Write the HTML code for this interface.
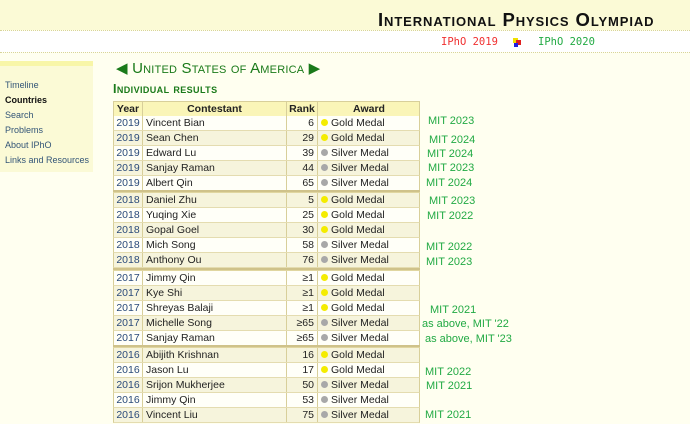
<!DOCTYPE html>
<html><head><meta charset="utf-8"><style>
*{margin:0;padding:0;box-sizing:border-box}
body{width:690px;height:424px;overflow:hidden;background:#fffff0;font-family:"Liberation Sans","DejaVu Sans",sans-serif;position:relative}
.a{position:absolute;white-space:nowrap}
#hdr{left:0;top:0;width:690px;height:30px;background:#fbfad6}
#band{left:0;top:31px;width:690px;height:21px;background:#fff}
.dot{left:0;width:690px;height:1px;border-top:1px dotted #d8d49a}
#title{left:378px;top:9px;font-size:18.5px;font-weight:bold;font-variant:small-caps;color:#111;letter-spacing:0.9px}
#side{left:0;top:61px;width:93px;height:111px;background:#fbfad6}
#sidetop{left:0;top:61px;width:93px;height:5px;background:#f8f6a8}
.nav{left:5px;font-size:9px;color:#335577}
#country{left:116px;top:59px;font-size:15px;font-variant:small-caps;color:#1a7a1a;letter-spacing:0.2px}
#ind{left:113px;top:82px;font-size:12.5px;font-weight:bold;font-variant:small-caps;color:#1a7a1a;letter-spacing:0.4px}
.row{position:absolute;left:113px;width:307px;height:15px;font-size:10.5px;color:#222;border-left:1px solid #d8cf9a;border-right:1px solid #d8cf9a;border-bottom:1px solid #e4dcb0}
.row div{position:absolute;top:0;height:14px;line-height:15px;border-right:1px solid #d8cf9a}
.c1{left:0;width:29px;text-align:center;color:#2a4a7a}
.c2{left:29px;width:144px;padding-left:3px}
.c3{left:173px;width:31px;text-align:right;padding-right:3px}
.c4{left:204px;width:102px;padding-left:3px;border-right:none!important}
.w{background:#fffff8}.c{background:#f6f4dc}
.h{background:#faf5b8;font-weight:bold;border-top:1px solid #d8cf9a}
.h div{text-align:center!important;padding:0!important;color:#222}
.g::before,.s::before{content:"";display:inline-block;width:7px;height:7px;border-radius:50%;margin-right:3px;vertical-align:0}
.g::before{background:#f4ec00}.s::before{background:#a8a8a8}
.sep{position:absolute;left:113px;width:307px;height:3px;border-top:2px solid #cfc28a;border-bottom:1px solid #e0d6a0}
.m{position:absolute;font-size:11px;color:#22aa44;white-space:nowrap}
</style></head><body>
<div class="a" id="hdr"></div>
<div class="a dot" style="top:30px"></div>
<div class="a" id="band"></div>
<div class="a dot" style="top:52px"></div>
<div class="a" id="title">International Physics Olympiad</div>
<div class="a" style="left:441px;top:36px;font-size:10.5px;color:#f03030;font-family:'DejaVu Sans Mono',monospace">IPhO 2019</div>
<div class="a" style="left:513px;top:38px;width:5px;height:5px;background:#f0e000"></div>
<div class="a" style="left:516px;top:40px;width:5px;height:5px;background:#e02020"></div>
<div class="a" style="left:514px;top:43px;width:4px;height:4px;background:#2020e0"></div>
<div class="a" style="left:538px;top:36px;font-size:10.5px;color:#22aa44;font-family:'DejaVu Sans Mono',monospace">IPhO 2020</div>
<div class="a" id="side"></div><div class="a" id="sidetop"></div>
<div class="a nav" style="top:80px">Timeline</div>
<div class="a nav" style="top:95px;font-weight:bold;color:#111">Countries</div>
<div class="a nav" style="top:110px">Search</div>
<div class="a nav" style="top:125px">Problems</div>
<div class="a nav" style="top:140px">About IPhO</div>
<div class="a nav" style="top:155px">Links and Resources</div>
<div class="a" id="country">◀ United States of America ▶</div>
<div class="a" id="ind">Individual results</div>

<div class="row h" style="top:101px;height:16px"><div class="c1">Year</div><div class="c2">Contestant</div><div class="c3">Rank</div><div class="c4">Award</div></div>

<div class="row w" style="top:116px"><div class="c1">2019</div><div class="c2">Vincent Bian</div><div class="c3">6</div><div class="c4 g">Gold Medal</div></div>
<div class="row c" style="top:131px"><div class="c1">2019</div><div class="c2">Sean Chen</div><div class="c3">29</div><div class="c4 g">Gold Medal</div></div>
<div class="row w" style="top:146px"><div class="c1">2019</div><div class="c2">Edward Lu</div><div class="c3">39</div><div class="c4 s">Silver Medal</div></div>
<div class="row c" style="top:161px"><div class="c1">2019</div><div class="c2">Sanjay Raman</div><div class="c3">44</div><div class="c4 s">Silver Medal</div></div>
<div class="row w" style="top:176px"><div class="c1">2019</div><div class="c2">Albert Qin</div><div class="c3">65</div><div class="c4 s">Silver Medal</div></div>
<div class="sep" style="top:190px"></div>
<div class="row c" style="top:193px"><div class="c1">2018</div><div class="c2">Daniel Zhu</div><div class="c3">5</div><div class="c4 g">Gold Medal</div></div>
<div class="row w" style="top:208px"><div class="c1">2018</div><div class="c2">Yuqing Xie</div><div class="c3">25</div><div class="c4 g">Gold Medal</div></div>
<div class="row c" style="top:223px"><div class="c1">2018</div><div class="c2">Gopal Goel</div><div class="c3">30</div><div class="c4 g">Gold Medal</div></div>
<div class="row w" style="top:238px"><div class="c1">2018</div><div class="c2">Mich Song</div><div class="c3">58</div><div class="c4 s">Silver Medal</div></div>
<div class="row c" style="top:253px"><div class="c1">2018</div><div class="c2">Anthony Ou</div><div class="c3">76</div><div class="c4 s">Silver Medal</div></div>
<div class="sep" style="top:268px"></div>
<div class="row w" style="top:271px"><div class="c1">2017</div><div class="c2">Jimmy Qin</div><div class="c3">≥1</div><div class="c4 g">Gold Medal</div></div>
<div class="row c" style="top:286px"><div class="c1">2017</div><div class="c2">Kye Shi</div><div class="c3">≥1</div><div class="c4 g">Gold Medal</div></div>
<div class="row w" style="top:301px"><div class="c1">2017</div><div class="c2">Shreyas Balaji</div><div class="c3">≥1</div><div class="c4 g">Gold Medal</div></div>
<div class="row c" style="top:316px"><div class="c1">2017</div><div class="c2">Michelle Song</div><div class="c3">≥65</div><div class="c4 s">Silver Medal</div></div>
<div class="row w" style="top:331px"><div class="c1">2017</div><div class="c2">Sanjay Raman</div><div class="c3">≥65</div><div class="c4 s">Silver Medal</div></div>
<div class="sep" style="top:345px"></div>
<div class="row c" style="top:348px"><div class="c1">2016</div><div class="c2">Abijith Krishnan</div><div class="c3">16</div><div class="c4 g">Gold Medal</div></div>
<div class="row w" style="top:363px"><div class="c1">2016</div><div class="c2">Jason Lu</div><div class="c3">17</div><div class="c4 g">Gold Medal</div></div>
<div class="row c" style="top:378px"><div class="c1">2016</div><div class="c2">Srijon Mukherjee</div><div class="c3">50</div><div class="c4 s">Silver Medal</div></div>
<div class="row w" style="top:393px"><div class="c1">2016</div><div class="c2">Jimmy Qin</div><div class="c3">53</div><div class="c4 s">Silver Medal</div></div>
<div class="row c" style="top:408px"><div class="c1">2016</div><div class="c2">Vincent Liu</div><div class="c3">75</div><div class="c4 s">Silver Medal</div></div>

<div class="m" style="left:428px;top:115px">MIT 2023</div>
<div class="m" style="left:429px;top:134px">MIT 2024</div>
<div class="m" style="left:427px;top:148px">MIT 2024</div>
<div class="m" style="left:428px;top:162px">MIT 2023</div>
<div class="m" style="left:426px;top:177px">MIT 2024</div>
<div class="m" style="left:429px;top:195px">MIT 2023</div>
<div class="m" style="left:427px;top:210px">MIT 2022</div>
<div class="m" style="left:426px;top:241px">MIT 2022</div>
<div class="m" style="left:426px;top:256px">MIT 2023</div>
<div class="m" style="left:430px;top:304px">MIT 2021</div>
<div class="m" style="left:422px;top:318px">as above, MIT '22</div>
<div class="m" style="left:425px;top:333px">as above, MIT '23</div>
<div class="m" style="left:425px;top:366px">MIT 2022</div>
<div class="m" style="left:426px;top:380px">MIT 2021</div>
<div class="m" style="left:425px;top:409px">MIT 2021</div>
</body></html>
